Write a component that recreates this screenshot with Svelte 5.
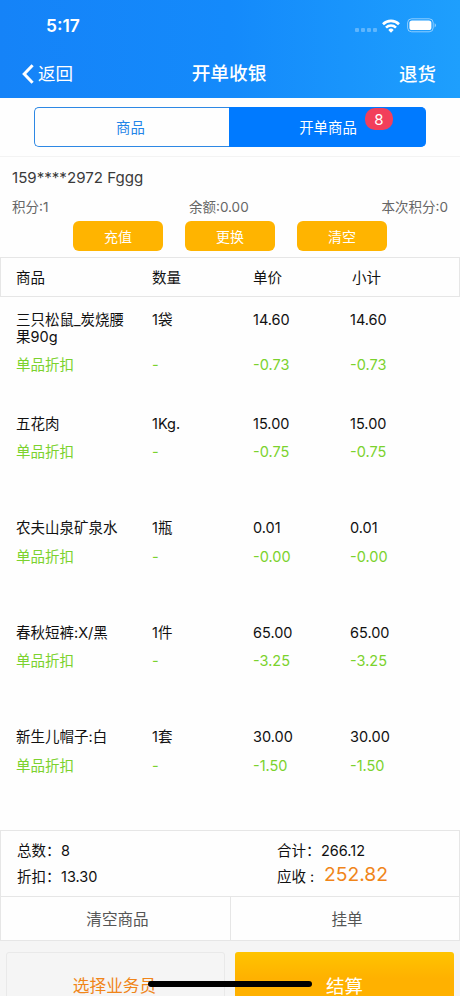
<script>
  const member = { name: '159****2972 Fggg', points: 1, balance: '0.00', earned: 0 }
  const actions = ['充值', '更换', '清空']
  const items = [
    { name: '三只松鼠_炭烧腰果90g', qty: '1袋', price: '14.60', off: '-0.73' },
    { name: '五花肉', qty: '1Kg.', price: '15.00', off: '-0.75' },
    { name: '农夫山泉矿泉水', qty: '1瓶', price: '0.01', off: '-0.00' },
    { name: '春秋短裤:X/黑', qty: '1件', price: '65.00', off: '-3.25' },
    { name: '新生儿帽子:白', qty: '1套', price: '30.00', off: '-1.50' },
  ]
  let tab = $state('order')
</script>

<div class="screen">
  <header>
    <div class="status">
      <span class="time">5:17</span>
      <span class="signal"><i></i><i></i><i></i><i></i></span>
      <svg class="wifi" width="18" height="14" viewBox="0 0 18 14" fill="none" stroke="#fff" stroke-width="2.6">
        <path d="M1 5.2a11.4 11.4 0 0 1 16 0" />
        <path d="M4 8.6a7.1 7.1 0 0 1 10 0" />
        <path d="M9 13.7l-2.7-2.8a3.9 3.9 0 0 1 5.4 0z" fill="#fff" stroke="none" />
      </svg>
      <svg class="battery" width="30" height="15" viewBox="0 0 30 15">
        <rect x="0.6" y="0.8" width="25.6" height="13" rx="4" fill="none" stroke="#fff" stroke-opacity="0.5" />
        <rect x="2.4" y="2.5" width="22" height="9.6" rx="2.6" fill="#fff" />
        <path d="M27.6 5.2v4.2q1.4-.6 1.4-2.1t-1.4-2.1z" fill="#fff" fill-opacity="0.5" />
      </svg>
    </div>
    <nav>
      <button class="back">
        <svg width="12" height="20" viewBox="0 0 12 20" fill="none" stroke="#fff" stroke-width="3"><path d="M10.6 1.2L2.2 10l8.4 8.8" /></svg>
        返回
      </button>
      <h1>开单收银</h1>
      <button class="refund">退货</button>
    </nav>
  </header>

  <div class="tabs">
    <button class:on={tab === 'goods'} onclick={() => (tab = 'goods')}>商品</button>
    <button class:on={tab === 'order'} onclick={() => (tab = 'order')}>开单商品<span class="badge">8</span></button>
  </div>

  <section class="member">
    <div class="name">{member.name}</div>
    <div class="info">
      <span>积分:{member.points}</span>
      <span>余额:{member.balance}</span>
      <span>本次积分:{member.earned}</span>
    </div>
    <div class="actions">
      {#each actions as label}
        <button>{label}</button>
      {/each}
    </div>
  </section>

  <div class="row head">
    <span>商品</span><span>数量</span><span>单价</span><span class="sub">小计</span>
  </div>

  <main>
    {#each items as item}
      <div class="item">
        <div class="row">
          <span class="title">{item.name}</span><span>{item.qty}</span><span>{item.price}</span><span>{item.price}</span>
        </div>
        <div class="row off">
          <span>单品折扣</span><span>-</span><span>{item.off}</span><span>{item.off}</span>
        </div>
      </div>
    {/each}
  </main>

  <section class="totals">
    <div><span class="label">总数：</span>8</div>
    <div><span class="label">合计：</span>266.12</div>
    <div><span class="label">折扣：</span>13.30</div>
    <div><span class="label">应收 :</span><span class="due">252.82</span></div>
  </section>

  <div class="split">
    <button>清空商品</button>
    <button>挂单</button>
  </div>

  <footer>
    <button class="staff">选择业务员</button>
    <button class="pay">结算</button>
    <div class="homebar"></div>
  </footer>
</div>

<style>
  :global(body) { background: #fff; }
  .screen {
    width: 460px; height: 996px; overflow: hidden; display: flex; flex-direction: column;
    font-family: Inter, "Noto Sans CJK SC", sans-serif; font-size: 14.5px; color: #111; background: #fefefe;
  }
  .screen * { box-sizing: border-box; }
  button { font: inherit; color: inherit; background: none; border: 0; padding: 0; margin: 0; white-space: nowrap; }

  header { flex: none; height: 98px; color: #fff; background: linear-gradient(90deg, #1583f8 0%, #148afb 50%, #1e9ffd 100%); }
  .status { height: 50px; padding: 1px 23px 0 46px; display: flex; align-items: center; }
  .time { font-size: 17.4px; font-weight: 600; margin-right: auto; }
  .signal { display: flex; gap: 2px; margin: 9px 5px 0 0; }
  .signal i { width: 4px; height: 4px; border-radius: 1px; background: rgba(255, 255, 255, 0.3); }
  .wifi { margin: 0 7px 0 0; }
  nav { height: 48px; padding: 0 24px 0 22px; display: grid; grid-template-columns: 1fr auto 1fr; align-items: center; }
  .back { display: flex; align-items: center; gap: 4px; font-size: 17.5px; line-height: 24px; }
  h1 { margin: 0; font-size: 18.7px; font-weight: 500; line-height: 24px; }
  .refund { justify-self: end; font-size: 18.5px; font-weight: 500; line-height: 24px; }

  .tabs { flex: none; height: 59px; padding: 9px 34px; display: flex; border-bottom: 1px solid #f3f3f3; }
  .tabs button { width: 197px; position: relative; padding-bottom: 1px; border: 1px solid #2d88e4; border-right: 0; color: #2385e8; border-radius: 5px 0 0 5px; font-size: 14.4px; }
  .tabs button:first-child { width: 195px; padding-right: 3px; }
  .tabs button + button { border-radius: 0 5px 5px 0; }
  .tabs .on { background: #007aff; border-color: #007aff; color: #fff; }
  .badge { position: absolute; right: 33px; top: 0; width: 28px; height: 22px; border-radius: 10px; background: #f23f5b; color: #fff; font-size: 15px; line-height: 23px; }

  .member { flex: none; height: 100px; padding: 10px 12px 0; }
  .name { font-size: 15.1px; line-height: 22px; color: #3a3a3a; }
  .info { margin-top: 8px; display: grid; grid-template-columns: 177px 1fr auto; font-size: 13.5px; line-height: 20px; color: #666; }
  .actions { margin-top: 4px; display: flex; justify-content: center; gap: 22px; }
  .actions button { width: 90px; height: 30px; border-radius: 6px; background: #ffb400; color: #fff; font-size: 14px; }

  .row { display: grid; grid-template-columns: 136px 101px 97px 1fr; padding-left: 16px; line-height: 17px; }
  .head { flex: none; height: 40px; align-items: center; border: 1px solid #e6e6e6; padding-left: 15px; }
  .sub { padding-left: 2px; }
  main { flex: none; height: 533px; }
  .item { height: 104.4px; padding-top: 13.6px; }
  .title { width: 112px; word-break: break-all; }
  .off { margin-top: 11.4px; color: #7bd22d; }

  .totals {
    flex: none; height: 67px; padding: 7px 16px 0; border: 1px solid #e6e6e6;
    display: grid; grid-template-columns: 260px 1fr; grid-auto-rows: 26px; line-height: 26px; white-space: nowrap;
  }
  .totals div { display: flex; }
  .label { width: 44px; }
  .due { margin: -3px 0 0 3px; font-size: 19.3px; color: #f08519; }

  .split { flex: none; height: 44px; display: flex; border: solid #e6e6e6; border-width: 0 1px 1px; }
  .split button { width: 229px; padding: 0 0 2px 4px; font-size: 15.6px; color: #555; }
  .split button + button { border-left: 1px solid #e6e6e6; }

  footer { flex: 1; position: relative; padding: 11px 6px 0; display: flex; justify-content: space-between; background: #f5f5f5; }
  footer button { width: 219px; height: 66px; border-radius: 3px; }
  .staff { border: 1px solid #e9e9e9; color: #f08519; font-size: 16.7px; padding-right: 2px; }
  .pay { background: linear-gradient(#ffc400, #ffb100 40%); color: #fff; font-size: 18.5px; }
  .homebar { position: absolute; left: 148px; top: 40px; width: 164px; height: 6px; border-radius: 3px; background: #000; }
</style>
